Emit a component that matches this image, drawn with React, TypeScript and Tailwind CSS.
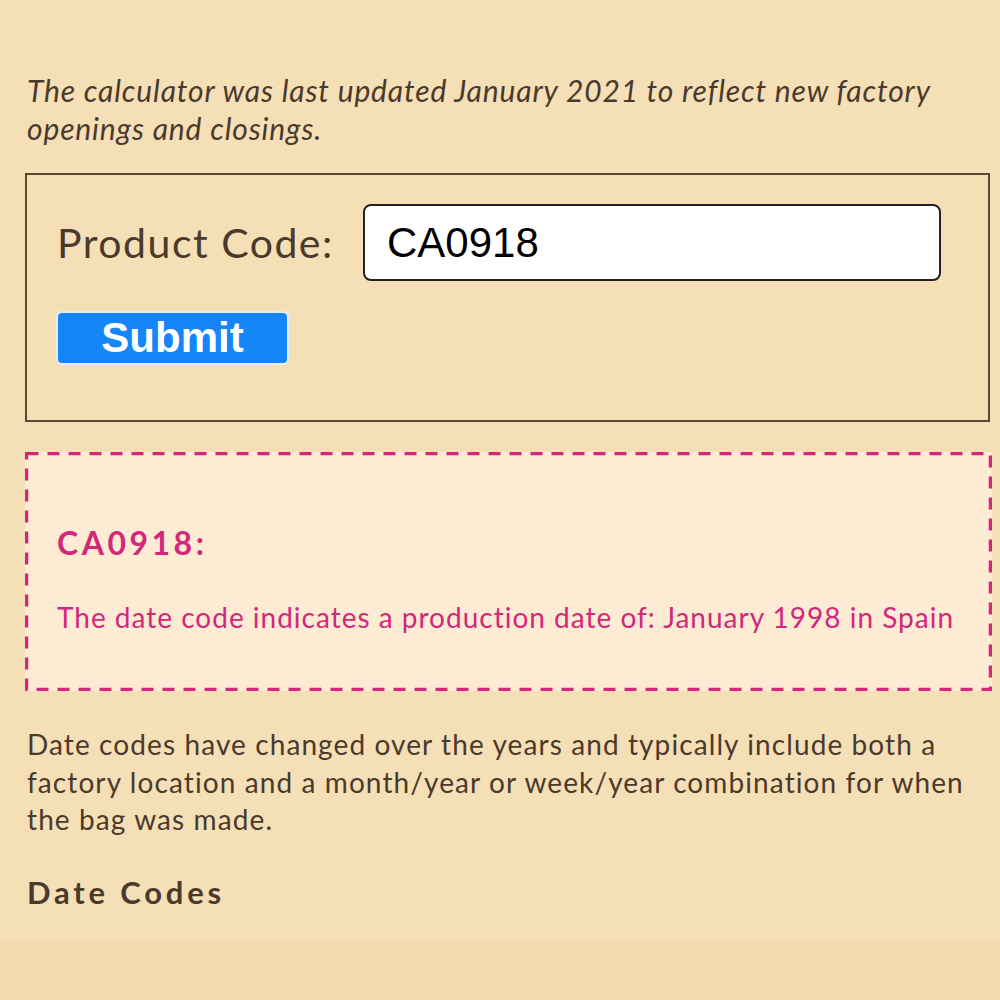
import React from "react";

const body = { fontFamily: "Lato, 'Open Sans', sans-serif" };
const arial = { fontFamily: "'Liberation Sans', Arial, sans-serif" };

// dashed frame drawn over the result box, browser dashes are too short
function DashedFrame() {
  return (
    <svg className="absolute inset-0 w-full h-full pointer-events-none" preserveAspectRatio="none">
      <rect
        x="1.5"
        y="1.5"
        width="calc(100% - 3px)"
        height="calc(100% - 3px)"
        fill="none"
        stroke="#d2287b"
        strokeWidth="3.5"
        strokeDasharray="12 9"
      />
    </svg>
  );
}

export default function App() {
  return (
    <div className="w-[1000px] h-[1000px] overflow-hidden bg-[#f5dfb7] text-[#4b3a2b] flex flex-col" style={body}>
      <div className="flex-1 px-[25px] pt-[71px]">
        <p className="italic text-[30px] leading-[38px] pl-[2px] tracking-[0.85px]">
          The calculator was last updated January 2021 to reflect new factory openings and closings.
        </p>

        <form
          className="mt-[26px] w-[965px] h-[249px] border-2 border-[#5b4736] pl-[30px] pt-[29px]"
          onSubmit={(e) => e.preventDefault()}
        >
          <div className="flex items-center">
            <label className="text-[41px] tracking-[1.5px] w-[306px] shrink-0 leading-none">Product Code:</label>
            <input
              className="w-[578px] min-w-0 shrink-0 h-[77px] rounded-[8px] border-2 border-[#222] bg-white px-[22px] text-[42px] text-black outline-none"
              style={arial}
              defaultValue="CA0918"
            />
          </div>
          <button
            type="submit"
            className="mt-[30px] -ml-[1px] w-[233px] h-[54px] rounded-[6px] border-2 border-[#e6eef2] bg-[#1585f7] text-white font-bold text-[42px] leading-none"
            style={arial}
          >
            Submit
          </button>
        </form>

        <div className="relative mt-[30px] w-[967px] h-[239px] bg-[#fdebd3] px-[32px] pt-[71px] text-[#d2287b]">
          <DashedFrame />
          <h3 className="font-bold text-[32px] leading-[40px] tracking-[3.5px]">CA0918:</h3>
          <p className="mt-[36px] text-[28px] leading-[36px] tracking-[1px]">
            The date code indicates a production date of: January 1998 in Spain
          </p>
        </div>

        <p className="mt-[35px] pl-[2px] text-[28px] leading-[37.5px] tracking-[1.1px]">
          Date codes have changed over the years and typically include both a factory location and a month/year or
          week/year combination for when the bag was made.
        </p>

        <h2 className="mt-[33px] pl-[2px] font-bold text-[31px] leading-[40px] tracking-[3.8px]">Date Codes</h2>
      </div>
      <div className="h-[61px] bg-[#f2dbb1]" />
    </div>
  );
}
